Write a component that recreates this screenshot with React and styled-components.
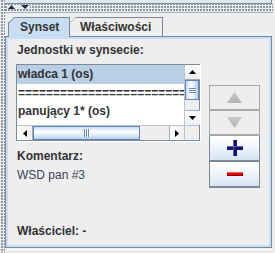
import React from "react";
import styled, { createGlobalStyle } from "styled-components";

const Global = createGlobalStyle`
  html, body { margin: 0; padding: 0; background: #eeeeee; }
  body { font-family: "Liberation Sans", Arial, sans-serif; }
  #root { width: 275px; height: 253px; overflow: hidden; }
`;

const Page = styled.div`
  display: flex;
  width: 275px;
  height: 253px;
  background: #eeeeee;
  overflow: hidden;
`;

const VDivider = styled.div`
  width: 5px;
  flex: none;
  background-color: #eeeeee;
  background-image: radial-gradient(circle at 1px 1px, #8a96a3 0.9px, transparent 1.1px);
  background-size: 3px 3px;
  background-position: 1px 0;
`;

const Main = styled.div`
  width: 267px;
  flex: none;
  display: flex;
  flex-direction: column;
`;

const TopEdge = styled.div`
  height: 3px;
  background: #dde8f3;
  border-bottom: 1px solid #7a8a99;
  border-right: 1px solid #7a8a99;
`;

const HDivider = styled.div`
  position: relative;
  height: 8px;
  background-color: #eeeeee;
  background-image: radial-gradient(circle at 1px 1px, #8a96a3 0.9px, transparent 1.1px);
  background-size: 3px 3px;
  background-position: 0 2px;
  border-bottom: 1px solid #a9b3bd;
  margin-right: -1px;
`;

const Arrows = styled.div`
  position: absolute;
  left: 2px;
  top: 1px;
  display: flex;
  gap: 6px;
  background: #eeeeee;
  padding: 0 1px;
`;

const TabRow = styled.div`
  display: flex;
  margin-top: 4px;
  padding-left: 3px;
  height: 19px;
  position: relative;
  z-index: 1;
`;

const Tab = styled.div`
  position: relative;
  box-sizing: border-box;
  padding-left: ${(p) => p.$pl}px;
  width: ${(p) => p.$w}px;
  background: ${(p) => (p.$active ? "#c8ddf2" : "#eeeeee")};
  border-top: 1px solid #7a8a99;
  border-right: 1px solid #7a8a99;
  border-left: ${(p) => (p.$active ? "1px solid #7a8a99" : "none")};
  clip-path: polygon(0 6px, 6px 0, 100% 0, 100% 100%, 0 100%);
  font-size: 12px;
  font-weight: bold;
  color: #333333;
  line-height: 18px;
  margin-bottom: ${(p) => (p.$active ? "-1px" : "0")};
  height: ${(p) => (p.$active ? "20px" : "19px")};
  &::before {
    content: "";
    position: absolute;
    left: -1px;
    top: 5px;
    width: 8.5px;
    height: 1px;
    background: #7a8a99;
    transform: rotate(-45deg);
    transform-origin: 0 0;
  }
`;

const Content = styled.div`
  flex: 1;
  border: 1px solid #7a8a99;
  border-top-color: #6e87b5;
  box-sizing: border-box;
  padding: 2px;
  background: #c8ddf2;
  display: flex;
`;

const BottomStrip = styled.div`
  height: 4px;
  flex: none;
  border-top: 1px solid #ffffff;
  margin-top: 1px;
  box-sizing: border-box;
`;

const Inner = styled.div`
  flex: 1;
  background: #eeeeee;
  padding: 4px 8px 0 8px;
  display: flex;
  flex-direction: column;
`;

const Label = styled.div`
  font-size: 12px;
  line-height: 15px;
  font-weight: bold;
  color: #333333;
  padding-left: 1px;
  margin-top: ${(p) => p.$mt || 0}px;
  white-space: nowrap;
`;

const Plain = styled(Label)`
  font-weight: normal;
  color: #3b4257;
`;

const Columns = styled.div`
  display: flex;
  gap: 8px;
  margin-top: 6px;
`;

const LeftCol = styled.div`
  display: flex;
  flex-direction: column;
  width: 185px;
`;

const ScrollOuter = styled.div`
  border-right: 1px solid #ffffff;
  border-bottom: 1px solid #ffffff;
  width: 184px;
`;

const ScrollPane = styled.div`
  border: 1px solid #7a8a99;
  display: grid;
  grid-template-columns: 167px 15px;
  grid-template-rows: 60px 15px;
  background: #ffffff;
`;

const Viewport = styled.div`
  overflow: hidden;
  background: #ffffff;
`;

const Row = styled.div`
  height: ${(p) => p.$h}px;
  line-height: ${(p) => p.$h}px;
  padding-left: 1px;
  font-size: 12px;
  font-weight: bold;
  color: #333333;
  white-space: nowrap;
  background: ${(p) => (p.$sel ? "#b8cfe5" : "#ffffff")};
`;

const VScroll = styled.div`
  display: flex;
  flex-direction: column;
  background: #eeeeee;
  border-left: 1px solid #b8c4d0;
`;

const SBtn = styled.div`
  flex: none;
  width: ${(p) => p.$w || 15}px;
  height: ${(p) => p.$h || 15}px;
  box-sizing: border-box;
  display: flex;
  align-items: center;
  justify-content: center;
  background: linear-gradient(${(p) => p.$dir || "180deg"}, #ffffff, #eeeeee);
  border: 1px solid #a2acb6;
  border-width: ${(p) => p.$bw || "1px"};
`;

const VThumb = styled.div`
  height: 20px;
  box-sizing: border-box;
  border: 1px solid #6382bf;
  background: linear-gradient(90deg, #c8ddf2 0%, #ffffff 40%, #dce9f6 70%, #b8cfe5 100%);
  display: flex;
  flex-direction: column;
  align-items: center;
  justify-content: center;
  gap: 1px;
`;

const GripH = styled.div`
  width: 7px;
  height: 1px;
  background: #6382bf;
  box-shadow: 0 1px 0 #ffffff;
`;

const Track = styled.div`
  flex: 1;
  background: #eeeeee;
`;

const HScroll = styled.div`
  display: flex;
  background: #eeeeee;
  border-top: 1px solid #b8c4d0;
`;

const HThumb = styled.div`
  width: 107px;
  box-sizing: border-box;
  border: 1px solid #6382bf;
  background: linear-gradient(180deg, #c8ddf2 0%, #ffffff 40%, #dce9f6 70%, #b8cfe5 100%);
  display: flex;
  align-items: center;
  justify-content: center;
  gap: 1px;
`;

const GripV = styled.div`
  width: 1px;
  height: 8px;
  background: #6382bf;
  box-shadow: 1px 0 0 #ffffff;
`;

const Corner = styled.div`
  background: #eeeeee;
  border-top: 1px solid #b8c4d0;
  border-left: 1px solid #b8c4d0;
`;

const RightCol = styled.div`
  display: flex;
  flex-direction: column;
  margin-top: 21px;
  width: 51px;
`;

const ActionBtn = styled.div`
  height: ${(p) => p.$h}px;
  box-sizing: border-box;
  border: 1px solid ${(p) => (p.$disabled ? "#a8a8a8" : "#7a8a99")};
  border-bottom-width: 2px;
  background: ${(p) =>
    p.$disabled ? "#eeeeee" : "linear-gradient(180deg, #ffffff 0%, #f4f8fc 35%, #d6e4f2 100%)"};
  display: flex;
  align-items: center;
  justify-content: center;
  & + & {
    border-top: none;
  }
`;

const Tri = ({ dir, size = 7, color = "#000" }) => {
  const h = Math.ceil(size / 2);
  const pts = {
    up: `0,${h} ${size},${h} ${size / 2},0`,
    down: `0,0 ${size},0 ${size / 2},${h}`,
    left: `${h},0 ${h},${size} 0,${size / 2}`,
    right: `0,0 0,${size} ${h},${size / 2}`,
  }[dir];
  const horiz = dir === "left" || dir === "right";
  return (
    <svg width={horiz ? h : size} height={horiz ? size : h} style={{ display: "block" }}>
      <polygon points={pts} fill={color} />
    </svg>
  );
};

const BigArrow = ({ up }) => (
  <svg width="15" height="11" style={{ display: "block" }}>
    <defs>
      <linearGradient id={up ? "ga" : "gb"} x1="0" y1="0" x2="0" y2="1">
        <stop offset="0" stopColor="#c8c8c8" />
        <stop offset="1" stopColor="#b4b4b4" />
      </linearGradient>
    </defs>
    <polygon
      points={up ? "0,11 15,11 7.5,0" : "0,0 15,0 7.5,11"}
      fill={`url(#${up ? "ga" : "gb"})`}
    />
  </svg>
);

const PlusIcon = () => (
  <svg width="16" height="16" style={{ display: "block" }}>
    <rect x="0" y="6" width="16" height="4" fill="#14146e" />
    <rect x="6" y="0" width="4" height="16" fill="#14146e" />
    <rect x="0" y="6" width="16" height="1" fill="#6060a8" />
    <rect x="6" y="0" width="1" height="16" fill="#6060a8" />
  </svg>
);

const MinusIcon = () => (
  <svg width="16" height="4" style={{ display: "block" }}>
    <rect x="0" y="0" width="16" height="4" fill="#e80000" />
    <rect x="0" y="3" width="16" height="1" fill="#8a0000" />
    <rect x="0" y="0" width="16" height="1" fill="#ff5050" />
  </svg>
);

const items = [
  { t: "władca 1 (os)", sel: true, h: 19 },
  { t: "==============================", h: 18 },
  { t: "panujący 1* (os)", h: 19 },
  { t: "hierarcha 2* (os)", h: 18 },
];

export default function App() {
  return (
    <>
      <Global />
      <Page>
        <VDivider />
        <Main>
          <TopEdge />
          <HDivider>
            <Arrows>
              <Tri dir="up" size={7} color="#1f2a4a" />
              <Tri dir="down" size={8} color="#1f2a4a" />
            </Arrows>
          </HDivider>
          <TabRow>
            <Tab $active $w={62} $pl={11}>Synset</Tab>
            <Tab $w={93} $pl={10}>Właściwości</Tab>
          </TabRow>
          <Content>
            <Inner>
              <Label>Jednostki w synsecie:</Label>
              <Columns>
                <LeftCol>
                  <ScrollOuter>
                    <ScrollPane>
                      <Viewport>
                        {items.map((it, i) => (
                          <Row key={i} $sel={it.sel} $h={it.h}>
                            {it.t}
                          </Row>
                        ))}
                      </Viewport>
                      <VScroll>
                        <SBtn $bw="0 0 1px 0">
                          <Tri dir="up" />
                        </SBtn>
                        <VThumb>
                          <GripH />
                          <GripH />
                          <GripH />
                        </VThumb>
                        <Track />
                        <SBtn $bw="1px 0 0 0">
                          <Tri dir="down" />
                        </SBtn>
                      </VScroll>
                      <HScroll>
                        <SBtn $w={16} $h={14} $bw="0 1px 0 0" $dir="90deg">
                          <Tri dir="left" />
                        </SBtn>
                        <HThumb>
                          <GripV />
                          <GripV />
                          <GripV />
                        </HThumb>
                        <Track />
                        <SBtn $w={15} $h={14} $bw="0 0 0 1px" $dir="90deg">
                          <Tri dir="right" />
                        </SBtn>
                      </HScroll>
                      <Corner />
                    </ScrollPane>
                  </ScrollOuter>
                  <Label $mt={7}>Komentarz:</Label>
                  <Plain $mt={4}>WSD pan #3</Plain>
                </LeftCol>
                <RightCol>
                  <ActionBtn $disabled $h={26}>
                    <BigArrow up />
                  </ActionBtn>
                  <ActionBtn $disabled $h={25}>
                    <BigArrow />
                  </ActionBtn>
                  <ActionBtn $h={26}>
                    <PlusIcon />
                  </ActionBtn>
                  <ActionBtn $h={26}>
                    <MinusIcon />
                  </ActionBtn>
                </RightCol>
              </Columns>
              <Label $mt={36}>Właściciel: -</Label>
            </Inner>
          </Content>
          <BottomStrip />
        </Main>
      </Page>
    </>
  );
}
